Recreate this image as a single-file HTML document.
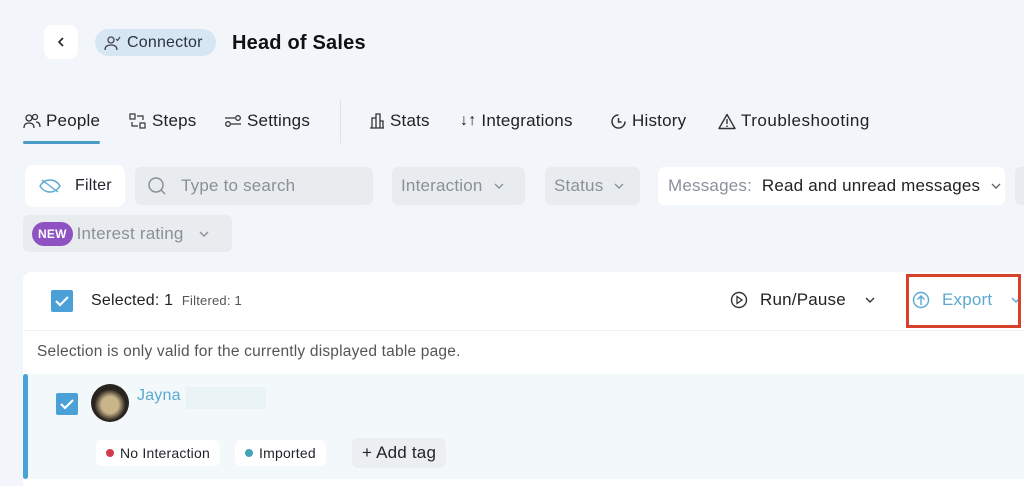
<!DOCTYPE html>
<html><head><meta charset="utf-8"><style>
*{margin:0;padding:0;box-sizing:border-box}
body{width:1024px;height:486px;overflow:hidden;background:#f2f5f9;font-family:"Liberation Sans",sans-serif;color:#1f2329;position:relative;letter-spacing:0.2px}
.a{position:absolute}
.t{font-size:17px;top:111px;display:flex;align-items:center;gap:5px;color:#222}
.box{border-radius:6px;display:flex;align-items:center;font-size:16px}
svg{display:block}
.cv{margin-left:10px}
</style></head><body>
<svg width="0" height="0" style="position:absolute"><defs><symbol id="cv" viewBox="0 0 12 8"><path d="M2 2l4 4 4-4" stroke="currentColor" stroke-width="1.4" fill="none"/></symbol></defs></svg>
<div class="a box" style="left:44px;top:25px;width:34px;height:34px;background:#fff;justify-content:center;border-radius:8px"><svg width="12" height="12" viewBox="0 0 12 12"><path d="M8 2L4 6l4 4" stroke="#222" stroke-width="1.6" fill="none"/></svg></div>
<div class="a box" style="left:95px;top:29px;width:121px;height:27px;background:#d6e6f2;border-radius:14px;padding-left:9px;gap:5px;font-size:16px;color:#2b3440"><svg width="18" height="16" viewBox="0 0 18 16"><circle cx="7" cy="5" r="3" stroke="#445" stroke-width="1.3" fill="none"/><path d="M1 15c0-4 3-5 6-5s6 1 6 5" stroke="#445" stroke-width="1.3" fill="none"/><path d="M12 4l1.5 1.5L16 2" stroke="#445" stroke-width="1.2" fill="none"/></svg>Connector</div>
<div class="a" style="left:232px;top:32px;font-size:20px;font-weight:bold;color:#111">Head of Sales</div>

<div class="a t" style="left:23px"><svg width="18" height="16" viewBox="0 0 18 16"><circle cx="6" cy="5" r="3" stroke="#333" stroke-width="1.3" fill="none"/><circle cx="12" cy="4" r="2.5" stroke="#333" stroke-width="1.3" fill="none"/><path d="M1 15c0-4 2-5 5-5s5 1 5 5M13 9c2 0 4 1 4 5" stroke="#333" stroke-width="1.3" fill="none"/></svg>People</div>
<div class="a" style="left:23px;top:141px;width:77px;height:3px;background:#4a9cc7;border-radius:2px"></div>
<div class="a t" style="left:129px"><svg width="18" height="16" viewBox="0 0 18 16"><rect x="1" y="1" width="5" height="5" stroke="#333" stroke-width="1.2" fill="none"/><rect x="11" y="10" width="5" height="5" stroke="#333" stroke-width="1.2" fill="none"/><path d="M8 3h6v4M3 9v4h6" stroke="#333" stroke-width="1.2" fill="none"/></svg>Steps</div>
<div class="a t" style="left:224px"><svg width="18" height="16" viewBox="0 0 18 16"><path d="M1 5h10M7 11h10" stroke="#333" stroke-width="1.3"/><circle cx="14" cy="5" r="2.3" stroke="#333" stroke-width="1.3" fill="none"/><circle cx="4" cy="11" r="2.3" stroke="#333" stroke-width="1.3" fill="none"/></svg>Settings</div>
<div class="a" style="left:340px;top:100px;width:1px;height:43px;background:#dde2e7"></div>
<div class="a t" style="left:369px"><svg width="16" height="16" viewBox="0 0 16 16"><path d="M1 15h14M3 15V5h4v10M7 15V1h4v14M11 15V8h3v7" stroke="#333" stroke-width="1.3" fill="none"/></svg>Stats</div>
<div class="a t" style="left:460px"><span style="font-size:16px">↓↑</span>Integrations</div>
<div class="a t" style="left:610px"><svg width="17" height="17" viewBox="0 0 17 17"><path d="M15 8.5A6.5 6.5 0 1 1 8.5 2" stroke="#333" stroke-width="1.5" fill="none"/><path d="M8.5 5v4h3" stroke="#333" stroke-width="1.5" fill="none"/></svg>History</div>
<div class="a t" style="left:718px;letter-spacing:0.5px"><svg width="18" height="17" viewBox="0 0 18 17"><path d="M9 1.5L17 15.5H1z" stroke="#333" stroke-width="1.4" fill="none" stroke-linejoin="round"/><path d="M9 6v5M9 12.5v1.5" stroke="#333" stroke-width="1.4"/></svg>Troubleshooting</div>

<div class="a box" style="left:25px;top:165px;width:100px;height:42px;background:#fff;padding-left:14px;gap:14px;border-radius:8px"><svg width="22" height="16" viewBox="0 0 22 16"><path d="M1 8c3-5 7-6 10-6s7 1 10 6c-3 5-7 6-10 6S4 13 1 8z" stroke="#5aa9d0" stroke-width="1.4" fill="none"/><path d="M3 2l16 12" stroke="#5aa9d0" stroke-width="1.4"/></svg>Filter</div>
<div class="a box" style="left:135px;top:167px;width:238px;height:38px;background:#e9ecef;padding-left:12px;gap:14px;color:#8a9099;font-size:17px"><svg width="20" height="20" viewBox="0 0 20 20"><circle cx="9" cy="9" r="7" stroke="#8a9099" stroke-width="1.5" fill="none"/><path d="M14 14l4 4" stroke="#8a9099" stroke-width="1.5"/></svg>Type to search</div>
<div class="a box" style="left:392px;top:167px;width:133px;height:38px;background:#e9ecef;padding-left:9px;color:#8a9099;font-size:17px">Interaction<svg class="cv" width="12" height="8" style="color:#8a9099"><use href="#cv"/></svg></div>
<div class="a box" style="left:545px;top:167px;width:95px;height:38px;background:#e9ecef;padding-left:9px;color:#8a9099;font-size:17px">Status<svg class="cv" width="12" height="8" style="color:#8a9099"><use href="#cv"/></svg></div>
<div class="a box" style="left:658px;top:167px;width:347px;height:38px;background:#fff;padding-left:10px;color:#222;font-size:17px"><span style="color:#8a9099">Messages:&nbsp;&nbsp;</span>Read and unread messages<svg class="cv" width="12" height="8" style="color:#666"><use href="#cv"/></svg></div>
<div class="a" style="left:1015px;top:167px;width:20px;height:38px;background:#e9ecef;border-radius:6px"></div>
<div class="a box" style="left:23px;top:215px;width:209px;height:37px;background:#e9ecef;padding-left:9px;color:#8a9099;gap:4px;font-size:17px"><span style="background:#8e52c2;color:#fff;font-size:12px;font-weight:bold;border-radius:12px;padding:5px 6px">NEW</span>Interest rating<svg class="cv" width="12" height="8" style="color:#8a9099"><use href="#cv"/></svg></div>

<div class="a" style="left:23px;top:272px;width:1001px;height:214px;background:#fff;border-radius:8px 0 0 0"></div>
<div class="a" style="left:23px;top:330px;width:1001px;height:1px;background:#eef1f4"></div>
<div class="a" style="left:51px;top:290px;width:22px;height:22px;background:#4ba0d8;border-radius:2px"><svg width="22" height="22" viewBox="0 0 22 22"><path d="M5 11l4 4 8-8" stroke="#fff" stroke-width="2.2" fill="none"/></svg></div>
<div class="a" style="left:91px;top:292px;font-size:16px;color:#222">Selected: 1 <span style="font-size:13px;color:#555;margin-left:4px">Filtered: 1</span></div>
<div class="a box" style="left:730px;top:290px;gap:12px;color:#222;font-size:17px"><svg width="18" height="18" viewBox="0 0 18 18"><circle cx="9" cy="9" r="7.5" stroke="#333" stroke-width="1.4" fill="none"/><path d="M7 5.5v7l5-3.5z" stroke="#333" stroke-width="1.3" fill="none"/></svg>Run/Pause<svg width="12" height="8" style="color:#333;margin-left:6px"><use href="#cv"/></svg></div>
<div class="a box" style="left:912px;top:290px;gap:12px;color:#5aa9d0;font-size:17px"><svg width="18" height="18" viewBox="0 0 18 18"><circle cx="9" cy="9" r="7.5" stroke="#5aa9d0" stroke-width="1.4" fill="none"/><path d="M9 14V5M5.5 8.5L9 5l3.5 3.5" stroke="#5aa9d0" stroke-width="1.4" fill="none"/></svg>Export<svg width="12" height="8" style="color:#5aa9d0;margin-left:6px"><use href="#cv"/></svg></div>
<div class="a" style="left:906px;top:274px;width:115px;height:54px;border:3px solid #d8412c"></div>
<div class="a" style="left:37px;top:343px;font-size:15.5px;color:#555">Selection is only valid for the currently displayed table page.</div>

<div class="a" style="left:23px;top:374px;width:1001px;height:105px;background:#f3f8fb"></div>
<div class="a" style="left:23px;top:374px;width:5px;height:105px;background:#4ba0d8;border-radius:3px"></div>
<div class="a" style="left:56px;top:393px;width:22px;height:22px;background:#4ba0d8;border-radius:2px"><svg width="22" height="22" viewBox="0 0 22 22"><path d="M5 11l4 4 8-8" stroke="#fff" stroke-width="2.2" fill="none"/></svg></div>
<div class="a" style="left:91px;top:384px;width:38px;height:38px;border-radius:50%;background:radial-gradient(circle at 50% 55%,#c9b58a 0 30%,#2a2420 55%)"></div>
<div class="a" style="left:137px;top:387px;font-size:16px;color:#5aa9d0">Jayna</div>
<div class="a" style="left:186px;top:387px;width:80px;height:22px;background:#eaf3f6"></div>
<div class="a box" style="left:96px;top:440px;height:26px;padding:0 10px;background:#fff;border-radius:6px;font-size:14px;gap:6px"><span style="width:8px;height:8px;border-radius:50%;background:#d23c4a"></span>No Interaction</div>
<div class="a box" style="left:235px;top:440px;height:26px;padding:0 10px;background:#fff;border-radius:6px;font-size:14px;gap:6px"><span style="width:8px;height:8px;border-radius:50%;background:#45a1b8"></span>Imported</div>
<div class="a box" style="left:352px;top:438px;height:30px;padding:0 10px;background:#eceff1;border-radius:6px;font-size:17px">+ Add tag</div>
</body></html>
